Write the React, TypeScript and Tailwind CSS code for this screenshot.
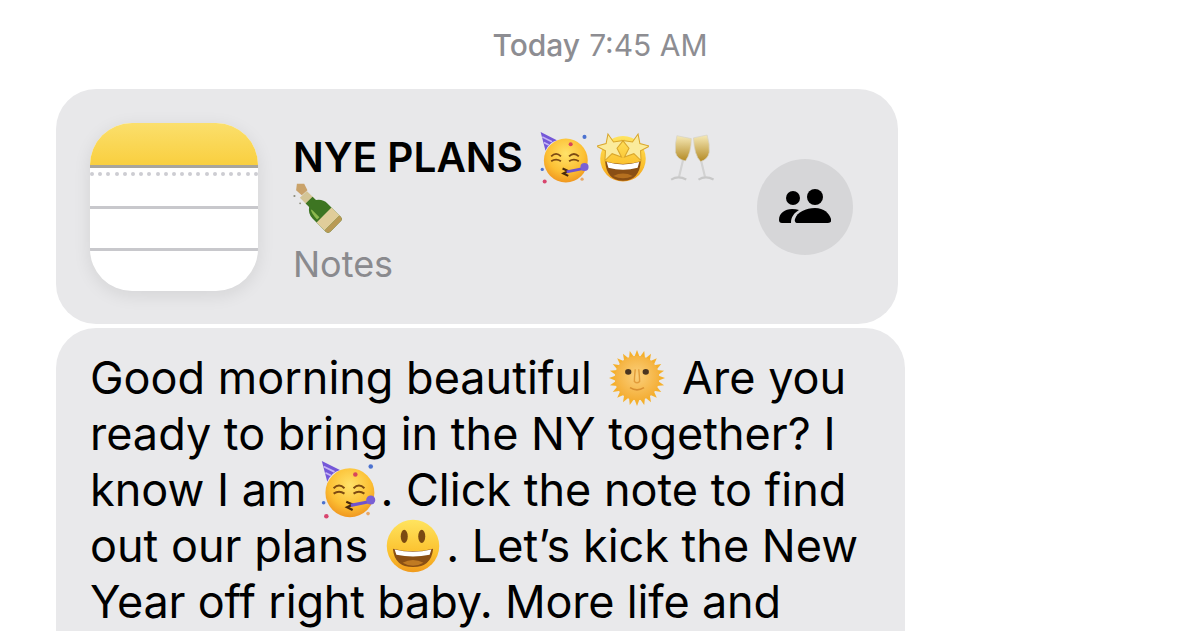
const font = { fontFamily: 'Inter, "Liberation Sans", sans-serif' };

type EmojiProps = { className: string };

function FaceDefs() {
    return (
        <defs>
            <radialGradient id="face" cx="50%" cy="35%" r="70%">
                <stop offset="0%" stopColor="#ffe26a" />
                <stop offset="60%" stopColor="#fcc034" />
                <stop offset="100%" stopColor="#ee8f1c" />
            </radialGradient>
            <linearGradient id="smile" x1="0" y1="0" x2="0" y2="1">
                <stop offset="0%" stopColor="#ffe45f" />
                <stop offset="65%" stopColor="#fbc02d" />
                <stop offset="100%" stopColor="#f09a1c" />
            </linearGradient>
            <linearGradient id="wine" x1="0" y1="0" x2="0" y2="1">
                <stop offset="0%" stopColor="#f6eab8" />
                <stop offset="100%" stopColor="#b48a24" />
            </linearGradient>
            <linearGradient id="yellowTop" x1="0" y1="0" x2="0" y2="1">
                <stop offset="0%" stopColor="#fbdf6c" />
                <stop offset="100%" stopColor="#f9cf3f" />
            </linearGradient>
            <radialGradient id="sunFace" cx="50%" cy="45%" r="55%">
                <stop offset="0%" stopColor="#fbd07c" />
                <stop offset="100%" stopColor="#f4ae36" />
            </radialGradient>
        </defs>
    );
}

function PartyFace({ className }: EmojiProps) {
    return (
        <svg viewBox="0 0 64 64" className={className}>
            <FaceDefs />
            <circle cx="33" cy="35" r="27" fill="url(#face)" />
            <path d="M2 0 L22 10 Q12 13 8 23 Z" fill="#7457d8" />
            <path d="M4 6 L16 12 M6 13 L12 16" stroke="#c6b5f5" strokeWidth="2" />
            <path d="M15 30 q6 -6 12 0 M37 30 q6 -6 12 0 M15 36 q6 -4 12 0 M37 36 q6 -4 12 0" fill="none" stroke="#7c4a12" strokeWidth="2.200" />
            <path d="M29 45 l7 3 l-6 3 l6 3" fill="none" stroke="#4a2a0c" strokeWidth="2.600" />
            <path d="M34 49 L54 45" stroke="#6f52cf" strokeWidth="3.500" />
            <circle cx="56" cy="43" r="5" fill="#7a60d4" />
            <circle cx="39" cy="15" r="2.500" fill="#d8455b" />
            <circle cx="56" cy="6" r="2.500" fill="#4c72d0" />
            <circle cx="7" cy="61" r="2.500" fill="#d8456e" />
            <circle cx="4" cy="46" r="2" fill="#4c72d0" />
            <circle cx="53" cy="58" r="2" fill="#e8a868" />
        </svg>
    );
}

function StarFace({ className }: EmojiProps) {
    const star = 'M0 -13 L3.600 -4.500 L13 -4 L5.600 2 L8 11 L0 6 L-8 11 L-5.600 2 L-13 -4 L-3.600 -4.500 Z';
    return (
        <svg viewBox="0 0 64 64" className={className}>
            <FaceDefs />
            <circle cx="32" cy="33" r="28" fill="url(#smile)" />
            <path d="M10 36 Q32 43 54 36 Q52 60 32 60 Q12 60 10 36 Z" fill="#8a4f14" />
            <path d="M12 37 Q32 43 52 37 L50 44 Q32 49 14 44 Z" fill="#fff" />
            <path d="M20 54 Q32 48 44 54 Q32 60 20 54 Z" fill="#b5701f" />
            <path d={star} transform="translate(17 19) rotate(-12) scale(1.300)" fill="#fbeb9c" stroke="#d9a62b" strokeWidth="1" />
            <path d={star} transform="translate(47 19) rotate(12) scale(1.300)" fill="#fbeb9c" stroke="#d9a62b" strokeWidth="1" />
        </svg>
    );
}

function Glasses({ className }: EmojiProps) {
    return (
        <svg viewBox="0 0 64 64" className={className}>
            <FaceDefs />
            <path d="M20 33 L14 58 M44 33 L50 58" stroke="#d2d2d2" strokeWidth="3" />
            <path d="M3 62 Q13 56 24 62 M41 62 Q51 56 62 62" fill="none" stroke="#c8c8c8" strokeWidth="3" />
            <path d="M11 1 L31 5 Q31 25 23 36 Q11 34 9 24 Q8 12 11 1 Z" fill="url(#wine)" stroke="#d6d2c4" strokeWidth="1" />
            <path d="M34 4 L53 0 Q57 12 56 24 Q54 34 44 37 Q35 28 34 4 Z" fill="url(#wine)" stroke="#d6d2c4" strokeWidth="1" />
        </svg>
    );
}

function Bottle({ className }: EmojiProps) {
    return (
        <svg viewBox="0 0 64 64" className={className}>
            <path d="M6 1 l9 0 l4 8 l-7 6 l-7 -6 Z" fill="#c9a26a" />
            <circle cx="3" cy="16" r="1.300" fill="#8a8a7a" />
            <circle cx="10" cy="25" r="1.100" fill="#8a8a7a" />
            <g transform="rotate(-45 38 38)">
                <rect x="32" y="4" width="12" height="12" fill="#d4c596" />
                <path d="M32 14 H44 V20 Q51 25 51 33 V56 Q51 60 47 60 H29 Q25 60 25 56 V33 Q25 25 32 20 Z" fill="#3d7522" />
                <path d="M25 40 H51 V54 H25 Z" fill="#e0cd9a" />
                <path d="M25 54 H51 V56 Q51 60 47 60 H29 Q25 60 25 56 Z" fill="#b99a55" />
                <path d="M31 24 Q28 29 28 38 H32 V25 Z" fill="#8db84f" />
            </g>
        </svg>
    );
}

function Sun({ className }: EmojiProps) {
    const rays = Array.from({ length: 24 }, (_, i) => i * 15);
    return (
        <svg viewBox="0 0 64 64" className={className}>
            <FaceDefs />
            {rays.map((deg) => (
                <path key={deg} d="M29 8 L32 0 L35 8 Z" fill="#f5b02c" transform={`rotate(${deg} 32 32)`} />
            ))}
            <circle cx="32" cy="32" r="25.500" fill="url(#sunFace)" />
            <ellipse cx="22" cy="25" rx="3.600" ry="3.200" fill="#4a3520" />
            <ellipse cx="42" cy="25" rx="3.600" ry="3.200" fill="#4a3520" />
            <path d="M30 22 Q29 32 29 36 Q32 39 35 36 Q35 32 34 22" fill="none" stroke="#e29c3a" strokeWidth="1.600" />
            <path d="M24 43 Q32 48 40 43" fill="none" stroke="#d98f30" strokeWidth="2" />
        </svg>
    );
}

function Smiley({ className }: EmojiProps) {
    return (
        <svg viewBox="0 0 64 64" className={className}>
            <FaceDefs />
            <circle cx="32" cy="32" r="30" fill="url(#smile)" />
            <ellipse cx="22" cy="21" rx="4" ry="7.500" fill="#7a4a12" />
            <ellipse cx="42" cy="21" rx="4" ry="7.500" fill="#7a4a12" />
            <path d="M9 35 Q32 41 55 35 Q53 56 32 56 Q11 56 9 35 Z" fill="#8a4f14" />
            <path d="M11 36 Q32 41 53 36 L51 42 Q32 46 13 42 Z" fill="#fff" />
            <path d="M20 51 Q32 45 44 51 Q32 58 20 51 Z" fill="#c07a22" />
        </svg>
    );
}

function NotesIcon() {
    const dots = Array.from({ length: 21 }, (_, i) => i);
    return (
        <div className="flex h-[168px] w-[168px] shrink-0 flex-col overflow-hidden rounded-[42px] bg-white shadow-[0_4px_18px_rgba(0,0,0,0.09)]">
            <svg viewBox="0 0 168 42" className="h-[42px] w-[168px] shrink-0">
                <FaceDefs />
                <rect width="168" height="42" fill="url(#yellowTop)" />
            </svg>
            <div className="h-[3px] shrink-0 bg-[#a8a59c]" />
            <div className="flex h-[38px] shrink-0 items-start justify-between pt-[4px]">
                {dots.map((i) => (
                    <span key={i} className="h-[4px] w-[4px] rounded-full bg-[#cdcdd2]" />
                ))}
            </div>
            <div className="h-[3px] shrink-0 bg-[#c8c8cc]" />
            <div className="h-[39px] shrink-0" />
            <div className="h-[3px] shrink-0 bg-[#c8c8cc]" />
        </div>
    );
}

function PeopleIcon() {
    return (
        <svg viewBox="0 0 52 36" className="h-[36px] w-[52px]">
            <circle cx="14" cy="9" r="7" fill="#000" />
            <circle cx="36" cy="8" r="8" fill="#000" />
            <path d="M0 31 C0 24 6 20 13 20 Q17 20 20 21 C15 24 12 28 12 34 H3 Q0 34 0 31 Z" fill="#000" />
            <path d="M19 34 Q15 34 16 30 C18 23 27 19 36 19 C45 19 50 24 52 30 Q53 34 49 34 Z" fill="#000" />
        </svg>
    );
}

export default function App() {
    return (
        <div className="h-[631px] w-[1200px] overflow-hidden bg-white" style={font}>
            <div className="flex h-[89px] items-start justify-center pt-[25px] text-[30px] leading-[40px] text-[#8d8d92]">
                <span className="font-medium">Today</span>
                <span className="ml-[9px]">7:45 AM</span>
            </div>
            <div className="ml-[56px] flex h-[235px] w-[842px] items-center rounded-[40px] bg-[#e8e8ea] pl-[34px] pr-[45px]">
                <NotesIcon />
                <div className="ml-[35px] flex-1 pt-[9px]">
                    <div className="flex h-[52px] items-center whitespace-nowrap text-[40.5px] font-semibold text-black">
                        <span>NYE PLANS</span>
                        <PartyFace className="ml-[16px] -mt-[2px] h-[52px] w-[52px]" />
                        <StarFace className="ml-[6px] -mt-[2px] h-[52px] w-[52px]" />
                        <Glasses className="ml-[20px] -mt-[2px] h-[50px] w-[46px]" />
                    </div>
                    <Bottle className="-mt-[2px] -ml-px h-[52px] w-[52px]" />
                    <div className="mt-[3px] text-[36px] leading-[52px] text-[#8a8a8e]">Notes</div>
                </div>
                <div className="flex h-[96px] w-[96px] shrink-0 items-center justify-center rounded-full bg-[#d6d6d8]">
                    <PeopleIcon />
                </div>
            </div>
            <div className="ml-[56px] mt-[4px] h-[400px] w-[849px] rounded-[40px] bg-[#e9e9eb] pl-[34px] pt-[22px] text-[45px] leading-[56px] whitespace-nowrap text-black">
                <div className="flex h-[56px] items-center">
                    Good morning beautiful
                    <Sun className="ml-[17px] mr-[17px] h-[56px] w-[56px]" />
                    Are you
                </div>
                <div className="h-[56px]">ready to bring in the NY together? I</div>
                <div className="flex h-[56px] items-center">
                    know I am
                    <PartyFace className="ml-[14px] mr-[2px] h-[58px] w-[58px]" />
                    <span className="whitespace-pre">. Click the note to find</span>
                </div>
                <div className="flex h-[56px] items-center">
                    out our plans
                    <Smiley className="ml-[17px] mr-[5px] h-[56px] w-[56px]" />
                    <span className="whitespace-pre">. Let’s kick the New</span>
                </div>
                <div className="h-[56px] tracking-[-0.18px]">Year off right baby. More life and</div>
            </div>
        </div>
    );
}
